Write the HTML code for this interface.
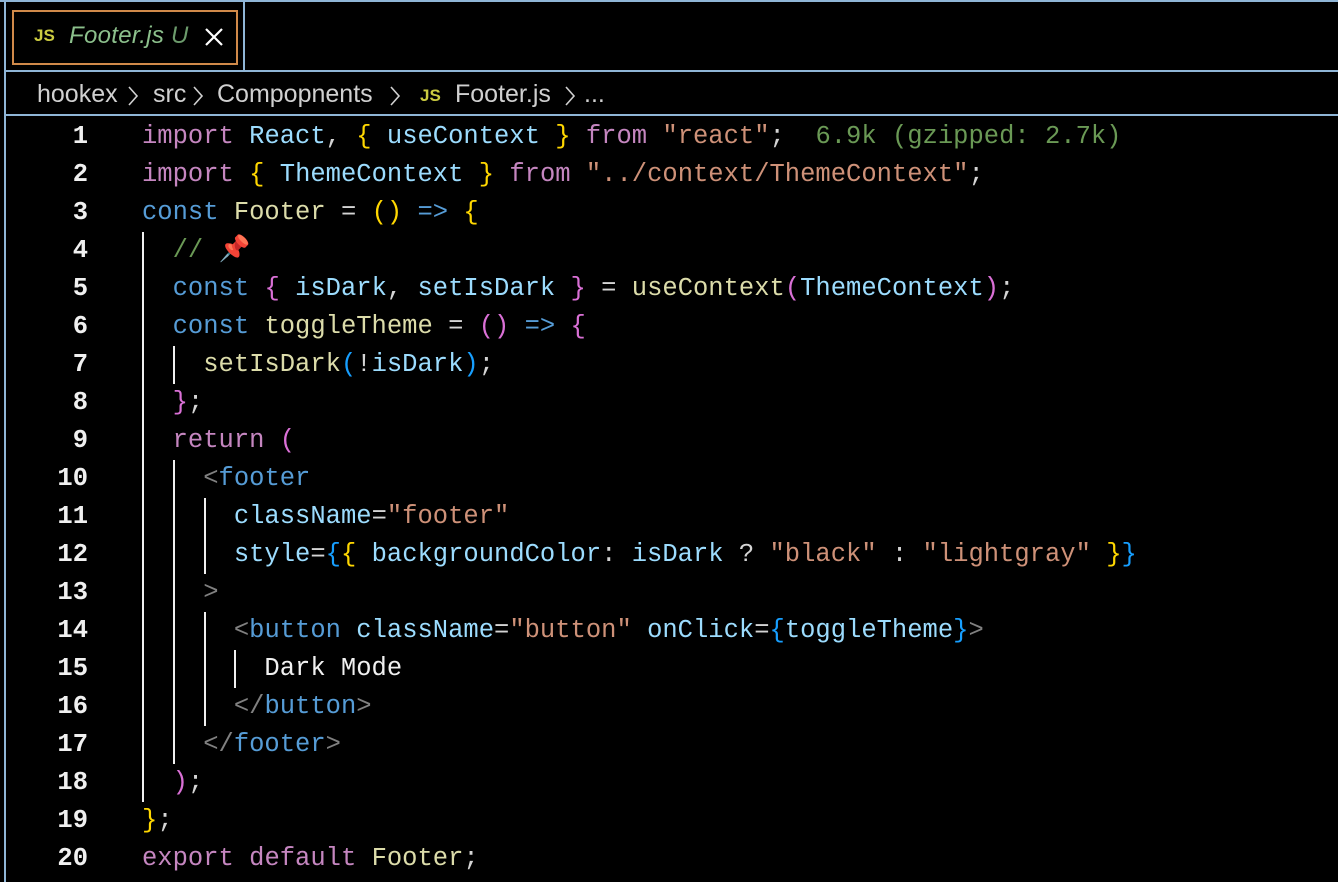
<!DOCTYPE html>
<html><head><meta charset="utf-8"><style>
html,body{margin:0;padding:0;background:#000;width:1338px;height:882px;overflow:hidden;position:relative;}
.hl{position:absolute;background:#8fb5d6;}
.code{position:absolute;left:0;top:118px;font-family:"Liberation Mono",monospace;font-size:25.5px;line-height:38px;white-space:pre;}
.ln{position:absolute;width:88px;text-align:right;color:#f0f0f0;font-family:"Liberation Mono",monospace;font-size:25.5px;line-height:38px;font-weight:bold;}
.tx{position:absolute;left:142px;color:#d4d4d4;}
.k{color:#c586c0}.v{color:#9cdcfe}.c{color:#569cd6}.s{color:#ce9178}.f{color:#dcdcaa}.y{color:#ffd700}.p{color:#da70d6}.b{color:#179fff}.g{color:#6a9955}.t{color:#808080}
.ig{position:absolute;width:2px;background:#f0f0f0;}
.sans{font-family:"Liberation Sans",sans-serif;}
.bc{position:absolute;top:80px;font-size:25px;color:#d0d0d0;font-family:"Liberation Sans",sans-serif;white-space:pre;}
</style></head><body>
<div class="hl" style="left:0;top:0;width:1338px;height:2px"></div>
<div class="hl" style="left:4px;top:0;width:2px;height:882px"></div>
<div class="hl" style="left:4px;top:70px;width:1334px;height:2px"></div>
<div class="hl" style="left:4px;top:114px;width:1334px;height:2px"></div>
<div class="hl" style="left:243px;top:0;width:2px;height:70px"></div>
<div style="position:absolute;left:12px;top:10px;width:222px;height:51px;border:2px solid #d08a4a;"></div>
<div class="sans" style="position:absolute;left:34px;top:26px;font-size:17px;font-weight:bold;color:#cbcb41;">JS</div>
<div class="sans" style="position:absolute;left:69px;top:22px;font-size:24px;font-style:italic;color:#8cc08c;letter-spacing:0.3px">Footer.js</div>
<div class="sans" style="position:absolute;left:171px;top:22px;font-size:24px;font-style:italic;color:#6c9b6c;">U</div>
<svg style="position:absolute;left:205px;top:28px" width="18" height="18"><path d="M1 1L17 17M17 1L1 17" stroke="#fff" stroke-width="2.2"/></svg>
<div class="bc" style="left:37px">hookex</div>
<div class="bc" style="left:153px">src</div>
<div class="bc" style="left:217px">Compopnents</div>
<div class="bc" style="left:420px;top:86px;font-size:17px;font-weight:bold;color:#cbcb41">JS</div>
<div class="bc" style="left:455px">Footer.js</div>
<div class="bc" style="left:584px">...</div>
<svg style="position:absolute;left:0;top:84px" width="600" height="24" fill="none" stroke="#d0d0d0" stroke-width="1.6"><path d="M129 3L137 12L129 21M194 3L202 12L194 21M391 3L399 12L391 21M566 3L574 12L566 21"/></svg>

<div class="ig" style="left:142px;top:232px;height:570px"></div>
<div class="ig" style="left:173px;top:346px;height:38px"></div>
<div class="ig" style="left:173px;top:460px;height:304px"></div>
<div class="ig" style="left:204px;top:498px;height:76px"></div>
<div class="ig" style="left:204px;top:612px;height:114px"></div>
<div class="ig" style="left:234px;top:650px;height:38px"></div>

<div class="code">
<div class="ln" style="top:0">1</div><div class="tx" style="top:0"><span class="k">import</span> <span class="v">React</span>, <span class="y">{</span> <span class="v">useContext</span> <span class="y">}</span> <span class="k">from</span> <span class="s">"react"</span>;  <span class="g">6.9k (gzipped: 2.7k)</span></div>
<div class="ln" style="top:38px">2</div><div class="tx" style="top:38px"><span class="k">import</span> <span class="y">{</span> <span class="v">ThemeContext</span> <span class="y">}</span> <span class="k">from</span> <span class="s">"../context/ThemeContext"</span>;</div>
<div class="ln" style="top:76px">3</div><div class="tx" style="top:76px"><span class="c">const</span> <span class="f">Footer</span> = <span class="y">()</span> <span class="c">=&gt;</span> <span class="y">{</span></div>
<div class="ln" style="top:114px">4</div><div class="tx" style="top:114px">  <span class="g">// </span><span style="color:#e04040">📌</span></div>
<div class="ln" style="top:152px">5</div><div class="tx" style="top:152px">  <span class="c">const</span> <span class="p">{</span> <span class="v">isDark</span>, <span class="v">setIsDark</span> <span class="p">}</span> = <span class="f">useContext</span><span class="p">(</span><span class="v">ThemeContext</span><span class="p">)</span>;</div>
<div class="ln" style="top:190px">6</div><div class="tx" style="top:190px">  <span class="c">const</span> <span class="f">toggleTheme</span> = <span class="p">()</span> <span class="c">=&gt;</span> <span class="p">{</span></div>
<div class="ln" style="top:228px">7</div><div class="tx" style="top:228px">    <span class="f">setIsDark</span><span class="b">(</span>!<span class="v">isDark</span><span class="b">)</span>;</div>
<div class="ln" style="top:266px">8</div><div class="tx" style="top:266px">  <span class="p">}</span>;</div>
<div class="ln" style="top:304px">9</div><div class="tx" style="top:304px">  <span class="k">return</span> <span class="p">(</span></div>
<div class="ln" style="top:342px">10</div><div class="tx" style="top:342px">    <span class="t">&lt;</span><span class="c">footer</span></div>
<div class="ln" style="top:380px">11</div><div class="tx" style="top:380px">      <span class="v">className</span>=<span class="s">"footer"</span></div>
<div class="ln" style="top:418px">12</div><div class="tx" style="top:418px">      <span class="v">style</span>=<span class="b">{</span><span class="y">{</span> <span class="v">backgroundColor</span>: <span class="v">isDark</span> ? <span class="s">"black"</span> : <span class="s">"lightgray"</span> <span class="y">}</span><span class="b">}</span></div>
<div class="ln" style="top:456px">13</div><div class="tx" style="top:456px">    <span class="t">&gt;</span></div>
<div class="ln" style="top:494px">14</div><div class="tx" style="top:494px">      <span class="t">&lt;</span><span class="c">button</span> <span class="v">className</span>=<span class="s">"button"</span> <span class="v">onClick</span>=<span class="b">{</span><span class="v">toggleTheme</span><span class="b">}</span><span class="t">&gt;</span></div>
<div class="ln" style="top:532px">15</div><div class="tx" style="top:532px">        <span style="color:#f0f0f0">Dark Mode</span></div>
<div class="ln" style="top:570px">16</div><div class="tx" style="top:570px">      <span class="t">&lt;/</span><span class="c">button</span><span class="t">&gt;</span></div>
<div class="ln" style="top:608px">17</div><div class="tx" style="top:608px">    <span class="t">&lt;/</span><span class="c">footer</span><span class="t">&gt;</span></div>
<div class="ln" style="top:646px">18</div><div class="tx" style="top:646px">  <span class="p">)</span>;</div>
<div class="ln" style="top:684px">19</div><div class="tx" style="top:684px"><span class="y">}</span>;</div>
<div class="ln" style="top:722px">20</div><div class="tx" style="top:722px"><span class="k">export</span> <span class="k">default</span> <span class="f">Footer</span>;</div>
</div>
</body></html>
